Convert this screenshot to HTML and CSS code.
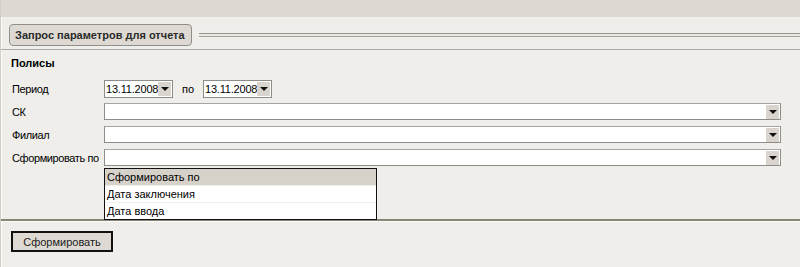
FILE: index.html
```html
<!DOCTYPE html>
<html lang="ru">
    <head>
        <meta charset="UTF-8">
        <title>Запрос параметров для отчета</title>
        <link rel="stylesheet" href="styles.css">
    </head>
    <body>
        <div class="verhnyaya-polosa"></div>
        <header class="zagolovok">
            <button type="button" class="vkladka">Запрос параметров для отчета</button>
            <div class="zhelob"></div>
        </header>
        <main class="forma">
            <h2 class="razdel">Полисы</h2>
            <div class="stroka">
                <label>Период</label>
                <div class="data">
                    <span>13.11.2008</span>
                    <span class="strelka"></span>
                </div>
                <span class="po">по</span>
                <div class="data">
                    <span>13.11.2008</span>
                    <span class="strelka"></span>
                </div>
            </div>
            <div class="stroka">
                <label>СК</label>
                <div class="spisok"><span class="strelka"></span></div>
            </div>
            <div class="stroka">
                <label>Филиал</label>
                <div class="spisok"><span class="strelka"></span></div>
            </div>
            <div class="stroka">
                <label>Сформировать по</label>
                <div class="spisok"><span class="strelka"></span></div>
            </div>
            <ul class="vypadayushchiy">
                <li class="vybran">Сформировать по</li>
                <li>Дата заключения</li>
                <li>Дата ввода</li>
            </ul>
        </main>
        <footer class="niz">
            <button type="button" class="knopka">Сформировать</button>
        </footer>
    </body>
</html>
```

FILE: styles.css
```css
* {
    box-sizing: border-box;
}
body {
    margin: 0;
    height: 267px;
    background: #efeeea;
    font-family: "Liberation Sans", Arial, sans-serif;
    font-size: 11px;
    color: #000;
    border-left: 1px solid #d2cec6;
    box-shadow: inset 1px 0 0 #fbfbf9;
}
.verhnyaya-polosa {
    height: 17px;
    background: #dedad3;
}
.zagolovok {
    display: flex;
    align-items: center;
    height: 33px;
    padding: 4px 0 0 8px;
    border-bottom: 1px solid #a9a9a5;
}
.vkladka {
    width: 183px;
    height: 22px;
    margin: 0;
    padding: 0 0 0 5px;
    text-align: left;
    background: #dedad3;
    border: 1px solid #8f8f8b;
    border-radius: 4px;
    font-family: inherit;
    font-size: 11px;
    font-weight: bold;
    color: #2a2a2a;
}
.zhelob {
    flex: 1;
    height: 4px;
    margin-left: 7px;
    border-top: 1px solid #96968f;
    border-bottom: 1px solid #a3a39c;
    background: #e9e9e4;
}
.forma {
    position: relative;
    padding: 7px 0 0 10px;
    height: 171px;
    border-bottom: 2px solid #8b8578;
}
.razdel {
    margin: 0 0 10px;
    font-size: 11px;
    font-weight: bold;
    line-height: 13px;
}
.stroka {
    display: flex;
    align-items: center;
    height: 17px;
    margin-bottom: 6px;
}
.stroka label {
    width: 93px;
    padding-left: 1px;
    white-space: nowrap;
    letter-spacing: -0.4px;
}
.data {
    display: flex;
    align-items: center;
    justify-content: space-between;
    width: 69px;
    height: 18px;
    padding: 0 1px 0 1px;
    background: #fff;
    border: 1px solid #8c8c88;
    letter-spacing: -0.2px;
}
.po {
    width: 30px;
    text-align: center;
}
.spisok {
    display: flex;
    justify-content: flex-end;
    align-items: center;
    width: 677px;
    height: 17px;
    padding-right: 1px;
    background: #fff;
    border: 1px solid #8c8c88;
    border-top-color: #a5a5a1;
}
.strelka {
    display: flex;
    align-items: center;
    justify-content: center;
    width: 13px;
    height: 14px;
    background: #d9d5ce;
}
.strelka::after {
    content: "";
    border-left: 4px solid transparent;
    border-right: 4px solid transparent;
    border-top: 4px solid #111;
}
.vypadayushchiy {
    position: absolute;
    left: 103px;
    top: 118px;
    width: 273px;
    margin: 0;
    padding: 0;
    list-style: none;
    background: #fff;
    border: 1px solid #111;
    font-size: 11px;
    z-index: 2;
}
.vypadayushchiy li {
    height: 17px;
    line-height: 16px;
    padding-left: 2px;
    border-bottom: 1px solid #eeeeea;
}
.vypadayushchiy li:last-child {
    height: 16px;
    border-bottom: none;
}
.vypadayushchiy .vybran {
    background: #d6d2ca;
}
.niz {
    border-top: 1px solid #fbfbf8;
    padding: 9px 0 0 10px;
}
.knopka {
    width: 102px;
    height: 21px;
    margin: 0;
    background: #dedad3;
    border: 2px solid #111;
    font-family: inherit;
    font-size: 11px;
    color: #1a1a1a;
}
```
